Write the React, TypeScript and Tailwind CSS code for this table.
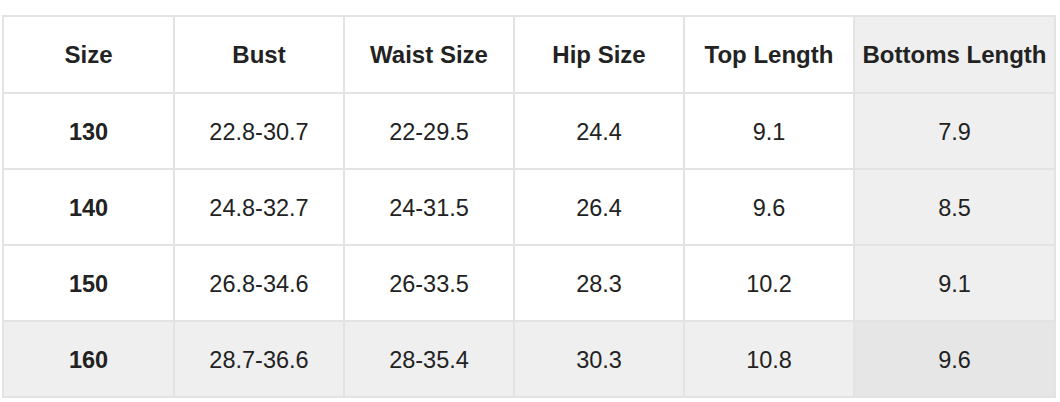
import React from 'react';

const headers = ['Size', 'Bust', 'Waist Size', 'Hip Size', 'Top Length', 'Bottoms Length'];

const rows = [
  ['130', '22.8-30.7', '22-29.5', '24.4', '9.1', '7.9'],
  ['140', '24.8-32.7', '24-31.5', '26.4', '9.6', '8.5'],
  ['150', '26.8-34.6', '26-33.5', '28.3', '10.2', '9.1'],
  ['160', '28.7-36.6', '28-35.4', '30.3', '10.8', '9.6'],
];

export default function App() {
  return (
    <div className="w-[1060px] h-[402px] bg-white pt-[15px] pl-[2px] font-['Liberation_Sans',Arial,sans-serif] text-[#222]">
      <table className="border-collapse table-fixed w-[1054px]">
        <colgroup>
          <col className="w-[171px]" />
          <col className="w-[170px]" />
          <col className="w-[170px]" />
          <col className="w-[170px]" />
          <col className="w-[170px]" />
          <col />
        </colgroup>
        <thead>
          <tr className="h-[77px]">
            {headers.map((h, i) => (
              <th
                key={h}
                className={`border-2 border-[#e3e3e3] text-center font-bold text-[24px] ${
                  i === 5 ? 'bg-[#efefef]' : 'bg-white'
                }`}
              >
                {h}
              </th>
            ))}
          </tr>
        </thead>
        <tbody>
          {rows.map((row, r) => {
            const lastRow = r === rows.length - 1;
            return (
              <tr key={row[0]} className="h-[76px]">
                {row.map((cell, i) => {
                  const lastCol = i === 5;
                  const bg = lastRow && lastCol ? 'bg-[#e6e6e6]' : lastRow || lastCol ? 'bg-[#efefef]' : 'bg-white';
                  return (
                    <td
                      key={i}
                      className={`border-2 border-[#e3e3e3] pt-[4px] text-center text-[23.5px] ${bg} ${i === 0 ? 'font-bold' : ''}`}
                    >
                      {cell}
                    </td>
                  );
                })}
              </tr>
            );
          })}
        </tbody>
      </table>
    </div>
  );
}
